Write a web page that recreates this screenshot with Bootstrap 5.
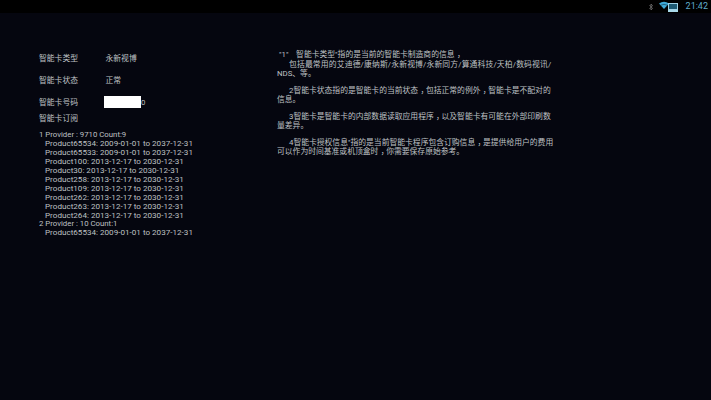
<!DOCTYPE html>
<html lang="zh-CN">
<head>
<meta charset="utf-8">
<title>智能卡信息</title>
<link href="https://cdn.jsdelivr.net/npm/bootstrap@5.3.0/dist/css/bootstrap.min.css" rel="stylesheet">
<style>
html,body{height:100%;}
body{background:#05060f;color:#bfc1c4;font-family:Roboto,"Noto Sans CJK SC",sans-serif;font-size:7.8px;overflow:hidden;}
.stbar{height:13px;background:#000;padding-right:3px;}
.stbt{margin-right:6px;}
.stnet{margin-right:7px;}
.sttime{color:#5fabc9;font-size:9px;line-height:13px;}
.panes{padding-top:27px;}
.leftp{width:277px;padding-left:39px;padding-top:13px;}
.rightp{width:278px;padding-top:10px;}
.frow{line-height:12px;}
.flabel{width:66.500px;}
.r1,.r2{margin-bottom:10px;}
.r3{margin-bottom:4px;}
.r4{margin-bottom:5.500px;}
.masked{display:inline-block;width:37px;height:12px;background:#fff;margin:-1px 0 0 -1.500px;vertical-align:top;}
.plist{line-height:8.900px;font-size:8.100px;}
.provln{font-size:7.800px;}
.prod{padding-left:6px;}
.para{line-height:9.500px;margin-bottom:7px;}
.ind{text-indent:12px;}
.ind1{padding-left:2px;}
.slashln{letter-spacing:.16px;}
.cjkcomma{padding-left:.3em;letter-spacing:-.3em;}
</style>
</head>
<body>
<div class="stbar d-flex justify-content-end align-items-center">
  <svg class="stbt" width="4" height="8" viewBox="0 0 4 8" aria-hidden="true"><path d="M.5 2 3.500 5.500 2 7V1L3.500 2.500 .5 6" fill="none" stroke="#6a6a6a" stroke-width=".9"/></svg>
  <svg class="stnet" width="20" height="11" viewBox="0 0 20 11" aria-hidden="true">
    <path d="M0 2.500Q5-.8 10 2.500L5 8Z" fill="#3fa9d6"/>
    <path d="M1.500 4.300Q5 2.300 8.500 4.300" fill="none" stroke="#0c3344" stroke-width=".6"/>
    <rect x="9.500" y="2.500" width="9" height="6" fill="#1d5a73" stroke="#9fd3e6" stroke-width="1"/>
    <rect x="9" y="9" width="10" height="2" fill="#a9d9ea"/>
  </svg>
  <span class="sttime">21:42</span>
</div>
<div class="panes d-flex">
  <div class="leftp">
    <div class="frow r1 d-flex"><div class="flabel">智能卡类型</div><div>永新视博</div></div>
    <div class="frow r2 d-flex"><div class="flabel">智能卡状态</div><div>正常</div></div>
    <div class="frow r3 d-flex"><div class="flabel">智能卡号码</div><div><span class="masked"></span>0</div></div>
    <div class="frow r4">智能卡订阅</div>
    <div class="plist">
      <div class="provln">1 Provider : 9710 Count:9</div>
      <div class="prod">Product65534: 2009-01-01 to 2037-12-31</div>
      <div class="prod">Product65533: 2009-01-01 to 2037-12-31</div>
      <div class="prod">Product100: 2013-12-17 to 2030-12-31</div>
      <div class="prod">Product30: 2013-12-17 to 2030-12-31</div>
      <div class="prod">Product258: 2013-12-17 to 2030-12-31</div>
      <div class="prod">Product109: 2013-12-17 to 2030-12-31</div>
      <div class="prod">Product262: 2013-12-17 to 2030-12-31</div>
      <div class="prod">Product263: 2013-12-17 to 2030-12-31</div>
      <div class="prod">Product264: 2013-12-17 to 2030-12-31</div>
      <div class="provln">2 Provider : 10 Count:1</div>
      <div class="prod">Product65534: 2009-01-01 to 2037-12-31</div>
    </div>
  </div>
  <div class="rightp">
    <div class="para">
      <div class="ind1 text-nowrap">"1"&nbsp;&nbsp;&nbsp; 智能卡类型"指的是当前的智能卡制造商的信息<span class="cjkcomma">，</span></div>
      <div class="ind slashln text-nowrap">包括最常用的艾迪德/康纳斯/永新视博/永新同方/算通科技/天柏/数码视讯/</div>
      <div class="text-nowrap">NDS、等。</div>
    </div>
    <div class="para">
      <div class="ind text-nowrap">2智能卡状态指的是智能卡的当前状态<span class="cjkcomma">，</span>包括正常的例外<span class="cjkcomma">，</span>智能卡是不配对的</div>
      <div class="text-nowrap">信息。</div>
    </div>
    <div class="para">
      <div class="ind text-nowrap">3智能卡是智能卡的内部数据读取应用程序<span class="cjkcomma">，</span>以及智能卡有可能在外部印刷数</div>
      <div class="text-nowrap">量差异。</div>
    </div>
    <div class="para">
      <div class="ind text-nowrap">4智能卡授权信息"指的是当前智能卡程序包含订购信息<span class="cjkcomma">，</span>是提供给用户的费用</div>
      <div class="text-nowrap">可以作为时间基准或机顶盒时<span class="cjkcomma">，</span>你需要保存原始参考。</div>
    </div>
  </div>
</div>
<script src="https://cdn.jsdelivr.net/npm/bootstrap@5.3.0/dist/js/bootstrap.bundle.min.js"></script>
</body>
</html>
